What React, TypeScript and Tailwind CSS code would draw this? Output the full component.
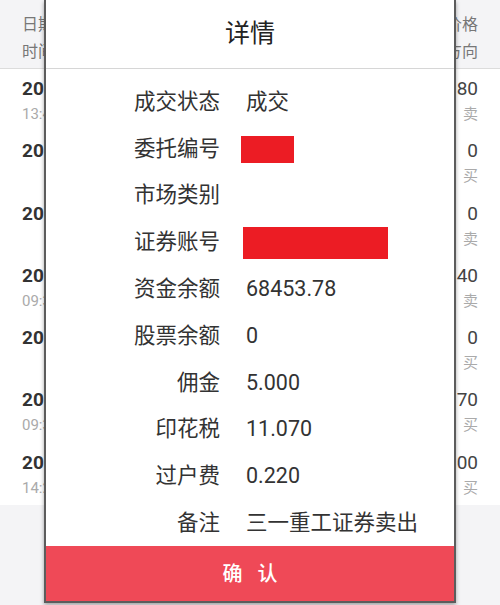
import React from "react";

const font = { fontFamily: "Roboto, 'Noto Sans CJK SC', sans-serif" };

const bgRows = [
  { date: "2019-05-20", time: "13:45:21", price: "12.80", dir: "卖" },
  { date: "2019-05-20", time: "", price: "0", dir: "买" },
  { date: "2019-05-20", time: "", price: "0", dir: "卖" },
  { date: "2019-05-17", time: "09:31:05", price: "12.40", dir: "卖" },
  { date: "2019-05-17", time: "", price: "0", dir: "买" },
  { date: "2019-05-16", time: "09:30:12", price: "12.70", dir: "买" },
  { date: "2019-05-15", time: "14:22:40", price: "13.00", dir: "买" },
];

const details: { label: string; value?: string; block?: "a" | "b" }[] = [
  { label: "成交状态", value: "成交" },
  { label: "委托编号", block: "a" },
  { label: "市场类别", value: "" },
  { label: "证券账号", block: "b" },
  { label: "资金余额", value: "68453.78" },
  { label: "股票余额", value: "0" },
  { label: "佣金", value: "5.000" },
  { label: "印花税", value: "11.070" },
  { label: "过户费", value: "0.220" },
  { label: "备注", value: "三一重工证券卖出" },
];

export default function App() {
  return (
    <div className="relative w-[500px] h-[605px] overflow-hidden bg-[#f4f4f6]" style={font}>
      {/* background list */}
      <div className="flex flex-col">
        <div className="h-[68px] flex justify-between px-[22px] pt-[11px] text-[16px] leading-[27px] text-[#777] bg-[#f4f4f6]">
          <div className="flex flex-col">
            <span>日期</span>
            <span>时间</span>
          </div>
          <div className="flex flex-col items-end">
            <span>价格</span>
            <span>方向</span>
          </div>
        </div>
        <div className="h-px bg-[#dcdcdc]" />
        <div className="bg-white flex flex-col">
          {bgRows.map((r, i) => (
            <div key={i} className="h-[62.3px] flex justify-between px-[22px] pt-[8px]">
              <div className="flex flex-col">
                <span className="text-[19px] leading-[24px] font-bold text-[#333]">{r.date}</span>
                <span className="text-[15px] leading-[26px] text-[#aaa]">{r.time}</span>
              </div>
              <div className="flex flex-col items-end">
                <span className="text-[19px] leading-[24px] text-[#444]">{r.price}</span>
                <span className="text-[15px] leading-[26px] text-[#aaa]">{r.dir}</span>
              </div>
            </div>
          ))}
        </div>
      </div>

      {/* modal */}
      <div className="absolute left-[44px] top-0 w-[412px] h-[603px] bg-white border-x-2 border-b-2 border-[#5c5c5c] shadow-[0_2px_4px_rgba(0,0,0,0.35)] flex flex-col">
        <div className="h-[68px] flex items-center justify-center text-[25px] text-[#222]">详情</div>
        <div className="h-px bg-[#d6d6d6]" />
        <div className="pt-[9.5px] flex flex-col">
          {details.map((d, i) => (
            <div key={i} className="h-[46.8px] flex items-center text-[21.5px] text-[#333]">
              <div className="w-[174px] text-right">{d.label}</div>
              <div className="ml-[26px] flex items-center">
                {d.block === "a" && <div className="w-[53px] h-[27px] bg-[#ec1c24] -ml-[5px] mt-[1px]" />}
                {d.block === "b" && <div className="w-[145px] h-[32px] bg-[#ec1c24] -ml-[3px] mt-[2px]" />}
                {d.value !== undefined && <span>{d.value}</span>}
              </div>
            </div>
          ))}
        </div>
        <div className="flex-1 bg-[#ef4957] flex items-center justify-center gap-[15px] text-white text-[20px] font-medium">
          <span>确</span>
          <span>认</span>
        </div>
      </div>
    </div>
  );
}
